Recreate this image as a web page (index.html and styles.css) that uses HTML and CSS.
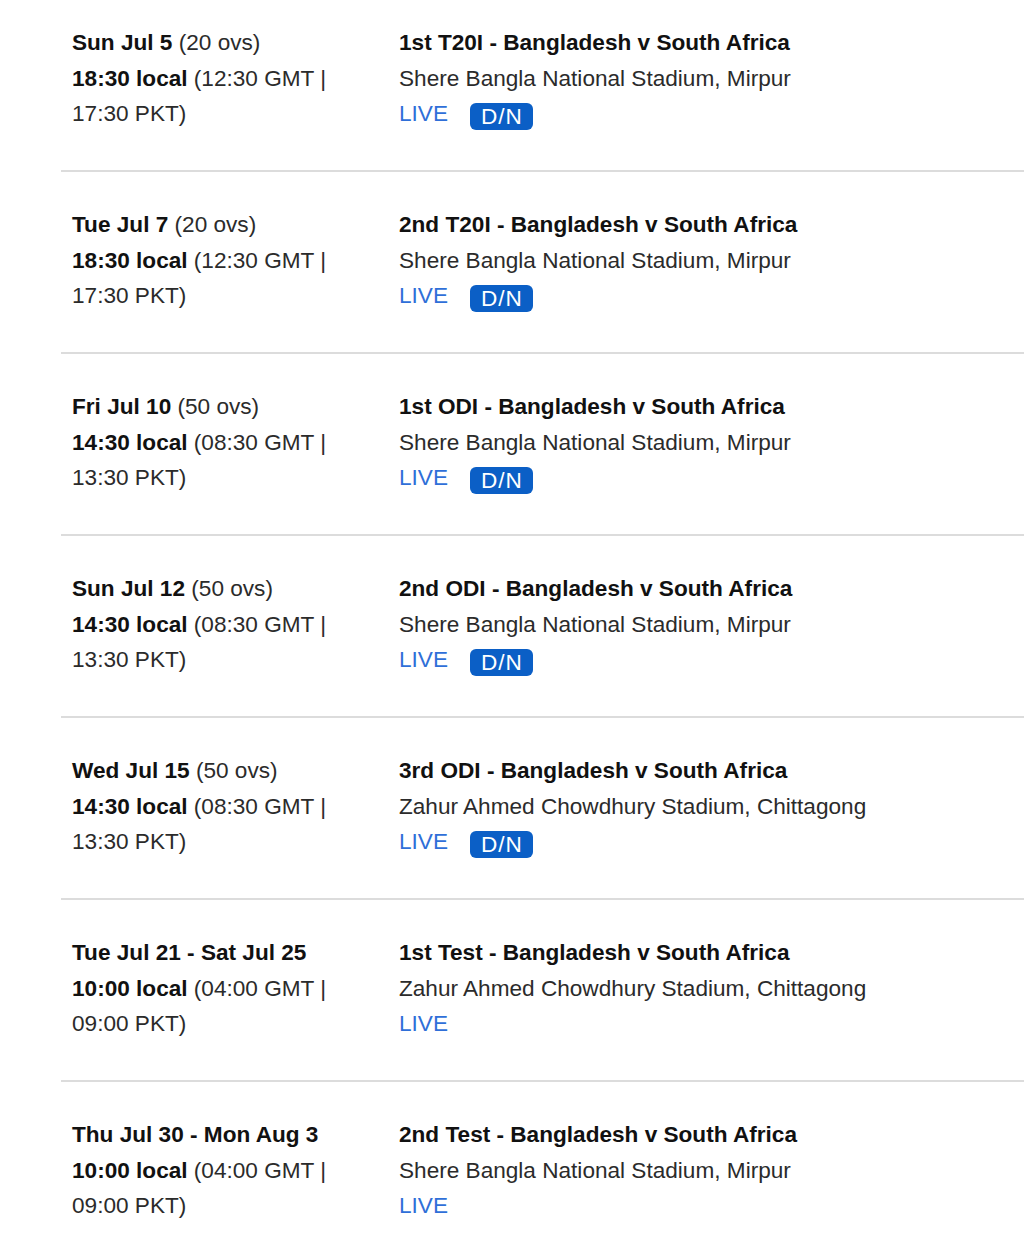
FILE: index.html
```html
<!DOCTYPE html>
<html>
<head>
<meta charset="utf-8">
<link rel="stylesheet" href="styles.css">
</head>
<body>
<div class="list">
  <div class="row">
    <div class="when"><b>Sun Jul 5</b> (20 ovs)<br><b>18:30 local</b> (12:30 GMT | 17:30 PKT)</div>
    <div class="match">
      <div class="title">1st T20I - Bangladesh v South Africa</div>
      <div class="venue">Shere Bangla National Stadium, Mirpur</div>
      <div class="links"><a class="live">LIVE</a><span class="badge">D/N</span></div>
    </div>
  </div>
  <div class="row">
    <div class="when"><b>Tue Jul 7</b> (20 ovs)<br><b>18:30 local</b> (12:30 GMT | 17:30 PKT)</div>
    <div class="match">
      <div class="title">2nd T20I - Bangladesh v South Africa</div>
      <div class="venue">Shere Bangla National Stadium, Mirpur</div>
      <div class="links"><a class="live">LIVE</a><span class="badge">D/N</span></div>
    </div>
  </div>
  <div class="row">
    <div class="when"><b>Fri Jul 10</b> (50 ovs)<br><b>14:30 local</b> (08:30 GMT | 13:30 PKT)</div>
    <div class="match">
      <div class="title">1st ODI - Bangladesh v South Africa</div>
      <div class="venue">Shere Bangla National Stadium, Mirpur</div>
      <div class="links"><a class="live">LIVE</a><span class="badge">D/N</span></div>
    </div>
  </div>
  <div class="row">
    <div class="when"><b>Sun Jul 12</b> (50 ovs)<br><b>14:30 local</b> (08:30 GMT | 13:30 PKT)</div>
    <div class="match">
      <div class="title">2nd ODI - Bangladesh v South Africa</div>
      <div class="venue">Shere Bangla National Stadium, Mirpur</div>
      <div class="links"><a class="live">LIVE</a><span class="badge">D/N</span></div>
    </div>
  </div>
  <div class="row">
    <div class="when"><b>Wed Jul 15</b> (50 ovs)<br><b>14:30 local</b> (08:30 GMT | 13:30 PKT)</div>
    <div class="match">
      <div class="title">3rd ODI - Bangladesh v South Africa</div>
      <div class="venue">Zahur Ahmed Chowdhury Stadium, Chittagong</div>
      <div class="links"><a class="live">LIVE</a><span class="badge">D/N</span></div>
    </div>
  </div>
  <div class="row">
    <div class="when"><b>Tue Jul 21 - Sat Jul 25</b><br><b>10:00 local</b> (04:00 GMT | 09:00 PKT)</div>
    <div class="match">
      <div class="title">1st Test - Bangladesh v South Africa</div>
      <div class="venue">Zahur Ahmed Chowdhury Stadium, Chittagong</div>
      <div class="links"><a class="live">LIVE</a></div>
    </div>
  </div>
  <div class="row">
    <div class="when"><b>Thu Jul 30 - Mon Aug 3</b><br><b>10:00 local</b> (04:00 GMT | 09:00 PKT)</div>
    <div class="match">
      <div class="title">2nd Test - Bangladesh v South Africa</div>
      <div class="venue">Shere Bangla National Stadium, Mirpur</div>
      <div class="links"><a class="live">LIVE</a></div>
    </div>
  </div>
</div>
</body>
</html>
```
FILE: styles.css
```css
html, body {
  margin: 0;
  padding: 0;
  background: #fff;
}
body {
  font-family: "Liberation Sans", Arial, sans-serif;
  font-size: 22.6px;
  line-height: 35.5px;
  color: #2b2b2b;
}
.list {
  padding-left: 61px;
}
.row {
  display: flex;
  padding: 35px 0 38.5px 11px;
  border-bottom: 2px solid #dcdcdc;
}
.row:first-child {
  padding-top: 25px;
}
.row:last-child {
  border-bottom: none;
}
.when {
  width: 272px;
  flex: none;
  margin-right: 55px;
}
.when b, .title {
  font-weight: bold;
  color: #111;
}
.match {
  flex: 1;
}
.links {
  display: flex;
  align-items: center;
  gap: 22px;
}
.live {
  color: #2f6fd8;
}
.badge {
  display: inline-block;
  background: #0b5fc6;
  color: #fff;
  border-radius: 6px;
  height: 27px;
  line-height: 27px;
  padding: 0 10px 0 11px;
  letter-spacing: 1px;
  margin-top: 5px;
}
```
